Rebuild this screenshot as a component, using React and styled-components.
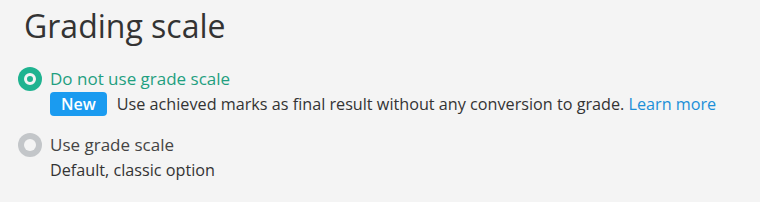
import React, { useState } from 'react';
import styled, { createGlobalStyle } from 'styled-components';

const GlobalStyle = createGlobalStyle`
  html, body {
    margin: 0;
    padding: 0;
    background: #f4f4f4;
    font-family: 'Open Sans', 'Liberation Sans', sans-serif;
  }
`;

const Panel = styled.section`
  padding: 5px 18px 0 18px;
  background: #f4f4f4;
  height: 202px;
  box-sizing: border-box;
`;

const Title = styled.h1`
  margin: 0 0 0 6px;
  font-size: 32px;
  font-weight: 400;
  line-height: 42px;
  color: #333;
`;

const Options = styled.div`
  display: flex;
  flex-direction: column;
  gap: 16px;
  margin-top: 19px;
`;

const Option = styled.label`
  display: grid;
  grid-template-columns: 24px 1fr;
  column-gap: 8px;
  cursor: pointer;
`;

const Radio = styled.span`
  width: 24px;
  height: 24px;
  border-radius: 50%;
  background: ${p => (p.checked ? '#1fb390' : '#c3c6c9')};
  display: flex;
  align-items: center;
  justify-content: center;
  margin-top: 1px;

  &::after {
    content: '';
    width: 12px;
    height: 12px;
    border-radius: 50%;
    box-sizing: border-box;
    background: ${p => (p.checked ? '#1fb390' : '#f4f4f4')};
    border: ${p => (p.checked ? '3px solid #f4f4f4' : 'none')};
  }
`;

const Label = styled.span`
  font-size: 17px;
  line-height: 26px;
  color: ${p => (p.checked ? '#1f9f80' : '#444')};
`;

const Desc = styled.div`
  grid-column: 2;
  display: flex;
  align-items: center;
  gap: 10px;
  font-size: 16.2px;
  line-height: 24px;
  color: #333;
`;

const Badge = styled.span`
  background: #1a9bf0;
  color: #fff;
  font-weight: 600;
  font-size: 16px;
  line-height: 24px;
  padding: 0 11px;
  border-radius: 4px;
`;

const Link = styled.a`
  color: #1b8fd8;
  text-decoration: none;
`;

export default function App() {
  const [useScale, setUseScale] = useState(false);

  return (
    <>
      <GlobalStyle />
      <Panel>
        <Title>Grading scale</Title>
        <Options>
          <Option onClick={() => setUseScale(false)}>
            <Radio checked={!useScale} />
            <Label checked={!useScale}>Do not use grade scale</Label>
            <Desc>
              <Badge>New</Badge>
              <span>
                Use achieved marks as final result without any conversion to grade.{' '}
                <Link href="#">Learn more</Link>
              </span>
            </Desc>
          </Option>
          <Option onClick={() => setUseScale(true)}>
            <Radio checked={useScale} />
            <Label checked={useScale}>Use grade scale</Label>
            <Desc>Default, classic option</Desc>
          </Option>
        </Options>
      </Panel>
    </>
  );
}
